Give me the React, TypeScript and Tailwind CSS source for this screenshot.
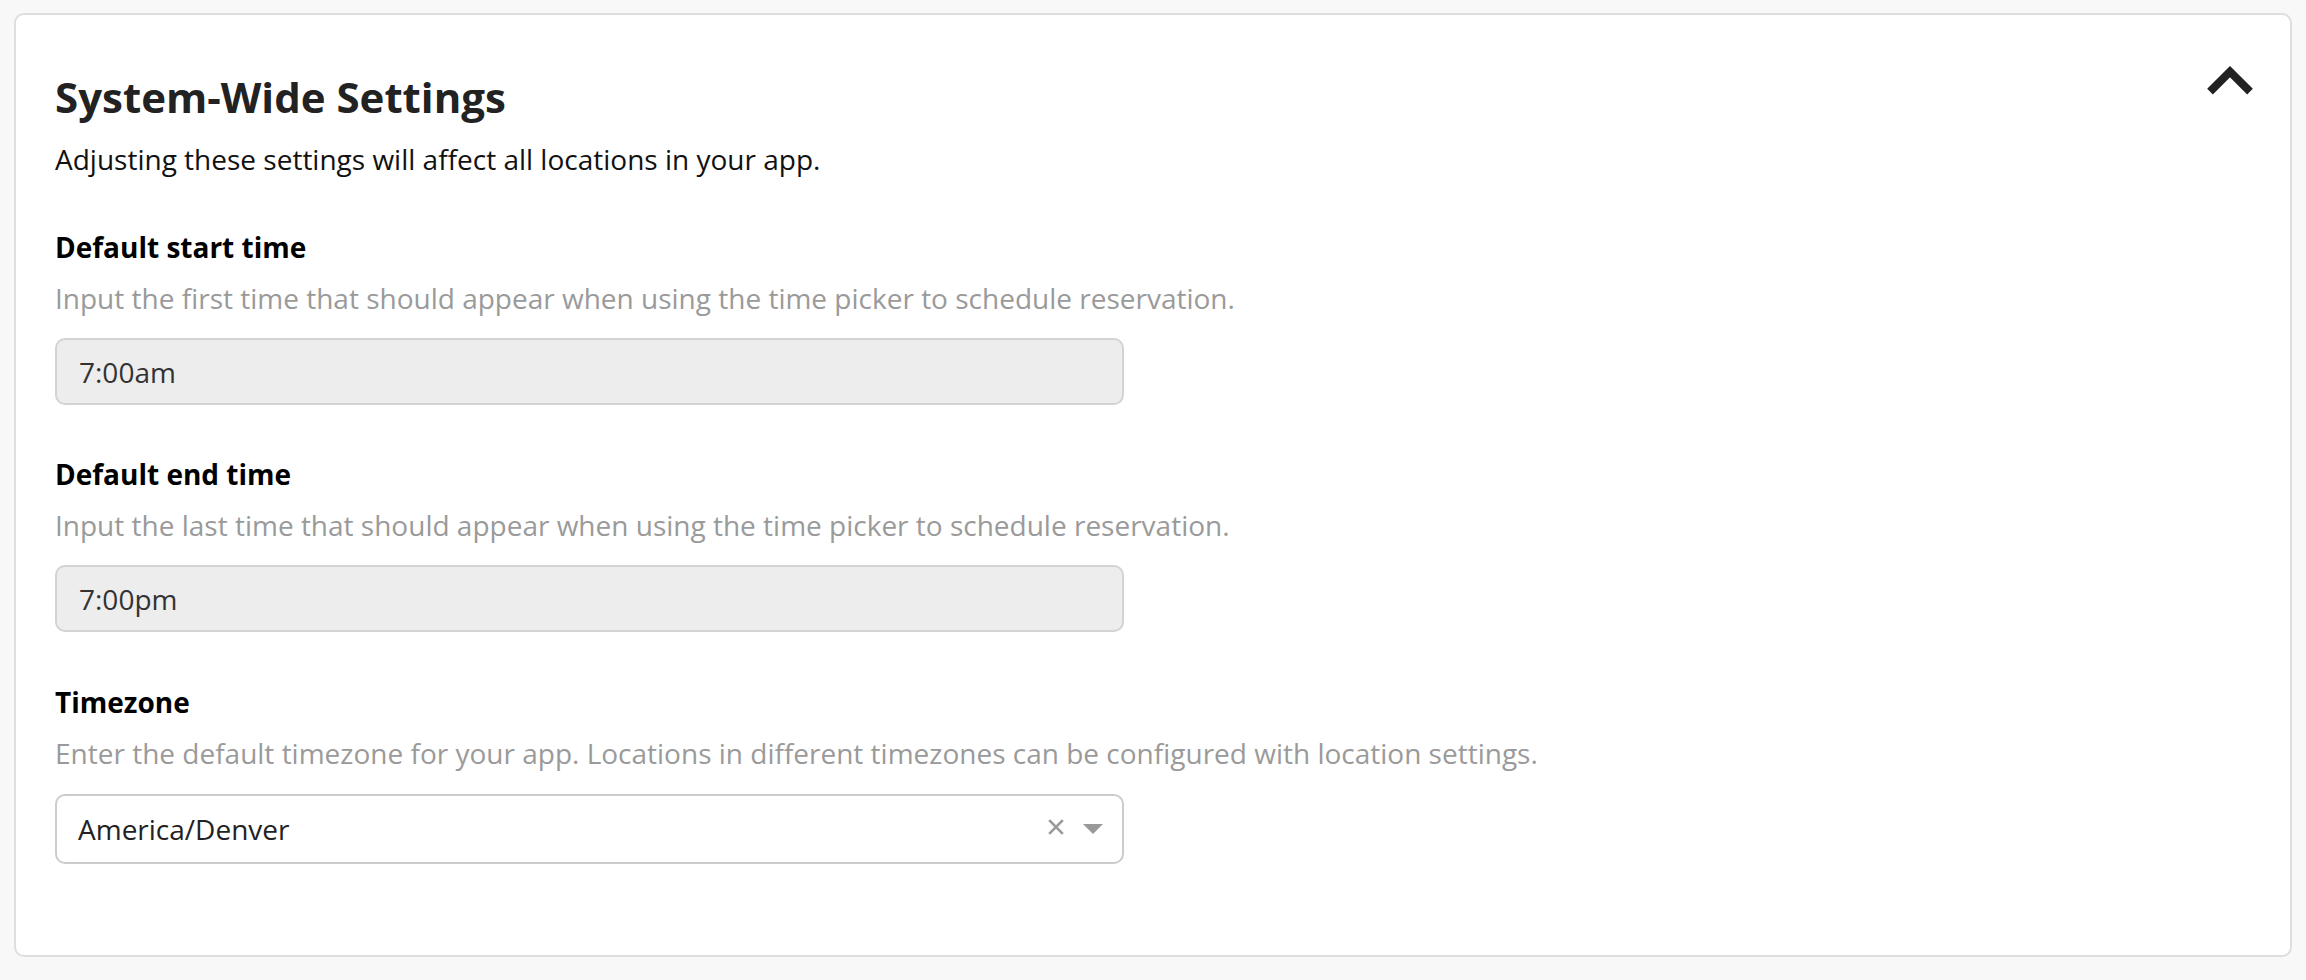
import { ChangeEvent, useState } from "react";

type TimeFieldProps = {
  label: string;
  hint: string;
  value: string;
};

function TimeField({ label, hint, value }: TimeFieldProps) {
  return (
    <div className="mt-[50px]">
      <div className="text-[28px] font-bold leading-[38px] text-black">{label}</div>
      <p className="mt-[13px] text-[28px] leading-[38px] text-[#9a9a9a]">{hint}</p>
      <div className="mt-[21px] flex h-[67px] w-[1069px] items-center rounded-[10px] border-2 border-[#d3d3d3] bg-[#ededed] pl-[22px] text-[28px] text-[#333]">
        {value}
      </div>
    </div>
  );
}

export default function App() {
  const [timezone, setTimezone] = useState("America/Denver");

  return (
    <div
      className="min-h-screen bg-[#f8f8f8] px-[14px] pt-[13px] pb-[20px]"
      style={{ fontFamily: '"Open Sans", "Noto Sans", sans-serif' }}
    >
      <section className="rounded-[10px] border-2 border-[#dedede] bg-white pt-[56px] pr-[36px] pb-[91px] pl-[39px]">
        <div className="flex items-start justify-between">
          <h2 className="text-[42px] font-bold leading-[52px] text-[#222]">System-Wide Settings</h2>
          <button type="button" aria-label="Collapse" className="-mt-[5px] text-[#222]">
            <svg className="block" width="48" height="31" viewBox="0 0 48 31" fill="none">
              <path d="M4 25.7 L24 5.7 L44 25.7" stroke="currentColor" strokeWidth="8" strokeLinecap="butt" strokeLinejoin="miter" />
            </svg>
          </button>
        </div>
        <p className="mt-[17px] text-[28px] leading-[38px] text-[#111]">
          Adjusting these settings will affect all locations in your app.
        </p>

        <div className="mt-[3px]">
          <TimeField
            label="Default start time"
            hint="Input the first time that should appear when using the time picker to schedule reservation."
            value="7:00am"
          />
          <TimeField
            label="Default end time"
            hint="Input the last time that should appear when using the time picker to schedule reservation."
            value="7:00pm"
          />

          <div className="mt-[51px]">
            <div className="text-[28px] font-bold leading-[38px] text-black">Timezone</div>
            <p className="mt-[13px] text-[28px] leading-[38px] text-[#9a9a9a]">
              Enter the default timezone for your app. Locations in different timezones can be configured with location settings.
            </p>
            <div className="mt-[22px] flex h-[70px] w-[1069px] items-center rounded-[10px] border-2 border-[#cccccc] bg-white pr-[19px] pl-[21px]">
              <input
                value={timezone}
                onChange={(e: ChangeEvent<HTMLInputElement>) => setTimezone(e.target.value)}
                className="min-w-0 flex-1 bg-transparent text-[28px] text-[#222] outline-none"
                style={{ fontFamily: '"Open Sans", "Noto Sans", sans-serif' }}
              />
              <button type="button" aria-label="Clear" className="-mt-[5px] text-[#999]">
                <svg className="block" width="16" height="16" viewBox="0 0 16 16">
                  <path d="M1.2 1.2 L14.8 14.8 M14.8 1.2 L1.2 14.8" stroke="currentColor" strokeWidth="2.6" />
                </svg>
              </button>
              <svg className="ml-[19px] block" width="20" height="10" viewBox="0 0 20 10">
                <path d="M0 0 H20 L10 10 Z" fill="#999" />
              </svg>
            </div>
          </div>
        </div>
      </section>
    </div>
  );
}
